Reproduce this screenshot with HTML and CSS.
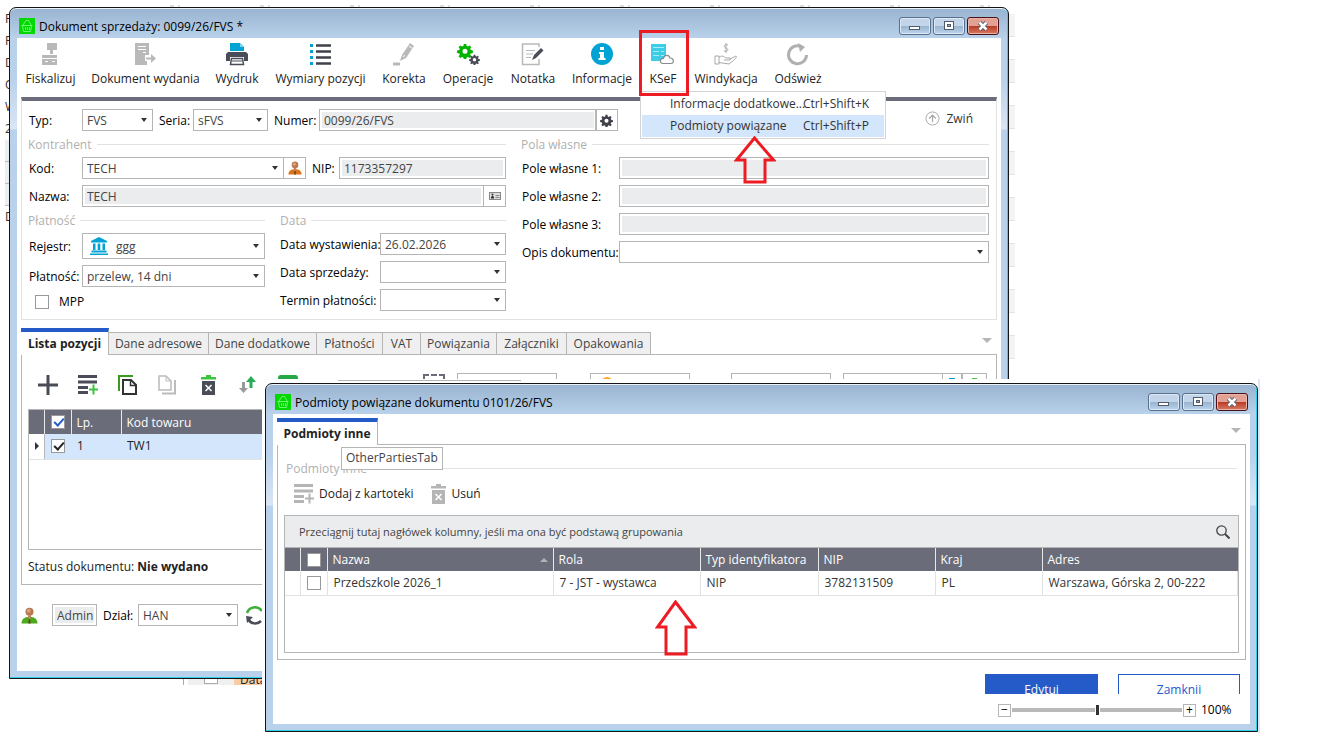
FILE: index.html
```html
<!DOCTYPE html>
<html lang="pl">
<head>
<meta charset="utf-8">
<title>Dokument sprzedaży: 0099/26/FVS</title>
<link rel="stylesheet" href="styles.css">
</head>
<body>
<svg class="defs" aria-hidden="true">
  <symbol id="basket" viewBox="0 0 16 16"><rect width="16" height="16" fill="#00d800"/><g fill="none" stroke="#6ff56f"><path d="M4 7 L7 2.500 H9.500 L12 7"/><path d="M2.500 7.500 H13.500 M3.500 8 L4.500 13.500 H11.500 L12.500 8 M6.500 9 V12 M8.500 9 V12 M10.500 9 V12"/></g></symbol>
  <symbol id="gear" viewBox="0 0 16 16"><path fill-rule="evenodd" d="M6.800 1h2.400l.4 2 1.300.6 1.800-1.200 1.600 1.700-1.100 1.800.5 1.200 2.200.5v2.300l-2.200.5-.5 1.200 1.200 1.800-1.700 1.600-1.800-1.100-1.300.5-.4 2.100H6.800l-.4-2.100-1.300-.5-1.800 1.100-1.600-1.600 1.100-1.800-.5-1.200-2.200-.5V7.600l2.200-.5.5-1.200-1.100-1.800 1.600-1.700 1.800 1.200 1.300-.6zM8 5.800a2.500 2.500 0 100 5 2.500 2.500 0 000-5z"/></symbol>
  <symbol id="person" viewBox="0 0 16 16"><path d="M0.500 15.500 C0.500 11.500 3 10 6 9.500 H10 C13 10 15.500 11.500 15.500 15.500 Z" fill="currentColor"/><path d="M6.500 8 H9.500 L9 11 L8 12 L7 11 Z" fill="#c08560"/><circle cx="8" cy="4.500" r="3.800" fill="#b87850"/><circle cx="7.300" cy="3.600" r="1.900" fill="#d7a080"/><path d="M7.300 11.500 H8.700 L9 15.500 H7 Z" fill="#60401c"/></symbol>
  <symbol id="addlines" viewBox="0 0 20 20"><path d="M0 1.500 H19 M0 7 H19 M0 12.500 H10 M0 17.500 H10" stroke="currentColor" stroke-width="3"/><path d="M15.500 9.500 V19.500 M11 14.500 H20" stroke="var(--accent, currentColor)" stroke-width="2"/></symbol>
  <symbol id="trash" viewBox="0 0 16 20"><path d="M0 2 H5 V0 H10 V2 H15 V4.500 H0 Z" fill="var(--accent, currentColor)"/><path d="M1 6 H14 V20 H1 Z" fill="currentColor"/><path d="M4.500 10 L10.500 16 M10.500 10 L4.500 16" stroke="#fff" stroke-width="1.500"/></symbol>
</svg>

<div class="behind behind-left" aria-hidden="true"><span>P</span><span>P</span><span>D</span><span>O</span><span>W</span><span>2</span><i></i><i></i><i></i><span>D</span></div>
<div class="behind behind-top" aria-hidden="true"></div>
<div class="behind behind-right" aria-hidden="true"></div>
<div class="behind behind-bottom" aria-hidden="true"><i></i><b>Data</b></div>

<main class="window main-window">
  <header class="titlebar">
    <svg class="app-icon"><use href="#basket"/></svg>
    <h1>Dokument sprzedaży: 0099/26/FVS *</h1>
    <div class="winbtns">
      <button class="winbtn" aria-label="Minimalizuj"><svg viewBox="0 0 14 10"><rect x="1.500" y="5.500" width="10" height="3" fill="#fff" stroke="#535b6b"/></svg></button>
      <button class="winbtn" aria-label="Maksymalizuj"><svg viewBox="0 0 14 10"><rect x="2.500" y=".5" width="9" height="8" fill="#fff" stroke="#535b6b"/><rect x="5.500" y="3.500" width="3" height="2" fill="#98b3d0" stroke="#535b6b"/></svg></button>
      <button class="winbtn close" aria-label="Zamknij okno"><svg viewBox="0 0 14 10"><path d="M3.500 1.500 L10.500 8.500 M10.500 1.500 L3.500 8.500" stroke="#535b6b" stroke-width="4.500"/><path d="M3.500 1.500 L10.500 8.500 M10.500 1.500 L3.500 8.500" stroke="#fff" stroke-width="2.500"/></svg></button>
    </div>
  </header>

  <div class="client">
    <nav class="ribbon">
      <button><svg viewBox="0 0 24 24" fill="#b9b9b9"><path d="M8 0H18V7H14V11H11V7H8Z"/><path d="M3 12H18V15H3Z"/><path d="M3 16H18V22H3Z"/><path d="M6 18.500H9M13 18.500H16" stroke="#fff"/></svg>Fiskalizuj</button>
      <button><svg viewBox="0 0 24 24" fill="#b9b9b9"><path d="M1 0H15V12H11V18H13V22H1Z"/><path d="M4 3.500H12M4 6.500H12M9 9.500H12" stroke="#fff" stroke-width="1"/><path d="M12 14.500H17V11L22 15.500L17 20V16.500H12Z"/></svg>Dokument wydania</button>
      <button><svg viewBox="0 0 24 24"><path d="M5 0H15L19 4V8H5Z" fill="#00a3d3"/><path d="M15 0V4H19" fill="#7fd4ec"/><path d="M3 9H21L23 11V18H19V14H5V18H1V11Z" fill="#4a4d57"/><path d="M6.500 15.500H17.500L18.500 21.500H5.500Z" fill="#fff" stroke="#4a4d57" stroke-width="1.500"/><path d="M7 18H17" stroke="#4a4d57"/></svg>Wydruk</button>
      <button><svg viewBox="0 0 24 24"><path d="M7 2.500H22M7 8.500H22M7 14.500H22M7 20.500H22" stroke="#3f424b" stroke-width="2.500"/><path d="M1 2.500H4M1 8.500H4M1 14.500H4M1 20.500H4" stroke="#00a3d3" stroke-width="3"/></svg>Wymiary pozycji</button>
      <button><svg viewBox="0 0 24 24"><path d="M1 21H8" stroke="#b9b9b9" stroke-width="3"/><path d="M8 18L10 12L18 0L22 3L14 15Z" fill="#b9b9b9"/><path d="M17 3L20.500 5.500M11.500 14L12.500 12" stroke="#fff"/></svg>Korekta</button>
      <button><svg viewBox="0 0 24 24"><use href="#gear" x="1" y="0" width="16" height="16" fill="#00b400"/><use href="#gear" x="13" y="11" width="11" height="11" fill="#4a4d57"/></svg>Operacje</button>
      <button><svg viewBox="0 0 24 24" fill="none"><path d="M18 4V1H1.500V21.500H18V16" stroke="#b9b9b9" stroke-width="1.500"/><path d="M5 7.500H14M5 11H12M5 14.500H10" stroke="#b9b9b9"/><path d="M11 17L13 12L20 5L22.500 7.500L15 15Z" fill="#4a4d57"/></svg>Notatka</button>
      <button><svg viewBox="0 0 24 24"><circle cx="12" cy="11" r="11" fill="#00a3d3"/><path d="M10 4H14V7H10ZM9 9H14V15H15.500V17H8.500V15H10V11H9Z" fill="#fff"/></svg>Informacje</button>
      <div class="ksef">
        <button><svg viewBox="0 0 24 24"><path d="M0 1H15V18H0Z" fill="#3dcde8"/><path d="M2 4.500H13M2 8.500H8M10 8.500H13M2 12.500H8M10 12.500H13" stroke="#a8ecf7" stroke-width="1"/><path d="M12 20.500C8 20.500 9 15 12.500 15.500C13 11.500 18 11.500 19 15C23 15 23.500 20.500 20 20.500Z" fill="#fff" stroke="#8b8b8b" stroke-width="1.200"/></svg>KSeF</button>
        <div class="menu" role="menu">
          <button role="menuitem"><span>Informacje dodatkowe...</span><span>Ctrl+Shift+K</span></button>
          <button role="menuitem" class="active"><span>Podmioty powiązane</span><span>Ctrl+Shift+P</span></button>
          <svg class="arrow" viewBox="0 0 42 48"><path d="M20.500 2L39.500 24H31V46H11V24H2.500Z"/></svg>
        </div>
        <div class="marker"></div>
      </div>
      <button><svg viewBox="0 0 24 24" fill="none" stroke="#a9a9a9"><path d="M14 2C10 1 9 4 12 5C15.500 6 14 9 10 8M12 0V10"/><path d="M1 13H5V21H1ZM5 14C9 12 10 14 12 15H16V17H10M16 16L22 13C24 14 19 18 15 21L5 19.500"/></svg>Windykacja</button>
      <button><svg viewBox="0 0 24 24" fill="none"><path d="M15 3.500A9 9 0 1 0 20.500 12" stroke="#b0b0b0" stroke-width="3"/><path d="M12 0L19 4L14 9Z" fill="#b0b0b0"/></svg>Odśwież</button>
    </nav>

    <section class="form">
      <div class="row row-top">
        <label class="lbl c53" for="typ">Typ:</label>
        <span class="select w71"><select id="typ"><option>FVS</option></select></span>
        <label class="lbl c40" for="seria">Seria:</label>
        <span class="select w75"><select id="seria"><option>sFVS</option></select></span>
        <label class="lbl c51" for="numer">Numer:</label>
        <input class="field ro w278" id="numer" value="0099/26/FVS" readonly>
        <button class="side" aria-label="Ustawienia numeru"><svg width="13" height="13" fill="#3f424b"><use href="#gear"/></svg></button>
        <button class="collapse"><svg viewBox="0 0 16 16" fill="none" stroke="#a9a9a9"><circle cx="8" cy="8" r="7"/><path d="M8 12V4.500M4.500 8L8 4.500L11.500 8" stroke-width="1.300"/></svg>Zwiń</button>
      </div>
      <div class="form-cols">
        <div class="left">
          <h2 class="legend">Kontrahent</h2>
          <div class="row">
            <label class="lbl c53" for="kod">Kod:</label>
            <span class="select grow"><select id="kod"><option>TECH</option></select></span>
            <button class="side" aria-label="Kontrahent"><svg class="orange" width="14" height="14"><use href="#person"/></svg></button>
            <label class="lbl c33" for="nip">NIP:</label>
            <input class="field ro w167" id="nip" value="1173357297" readonly>
          </div>
          <div class="row">
            <label class="lbl c53" for="nazwa">Nazwa:</label>
            <input class="field ro grow" id="nazwa" value="TECH" readonly>
            <button class="side" aria-label="Wizytówka"><svg width="12" height="8"><rect x=".5" y=".5" width="11" height="7" fill="#ddd" stroke="#888"/><path d="M2 6.500V5L3.500 3.500L5 5V6.500Z" fill="#333"/><circle cx="3.500" cy="2.500" r="1" fill="#333"/><path d="M6.500 3.500H10.500M6.500 5.500H10.500" stroke="#888"/></svg></button>
          </div>
          <div class="pay-cols">
            <div>
              <h2 class="legend">Płatność</h2>
              <div class="row tall">
                <label class="lbl c53" for="rejestr">Rejestr:</label>
                <span class="select bank grow"><svg viewBox="0 0 18 18" fill="#00a3d3"><path d="M9 0L17 4V5.500H1V4Z"/><path d="M3 6.500H5.500V13H3ZM7.700 6.500H10.300V13H7.700ZM12.500 6.500H15V13H12.500Z"/><path d="M1.500 13.500H16.500V15.500H1.500ZM0 16.500H18V18H0Z"/></svg><select id="rejestr"><option>ggg</option></select></span>
              </div>
              <div class="row">
                <label class="lbl c53" for="platnosc">Płatność:</label>
                <span class="select grow"><select id="platnosc"><option>przelew, 14 dni</option></select></span>
              </div>
              <label class="mpp"><input type="checkbox" class="check">MPP</label>
            </div>
            <div class="dates">
              <h2 class="legend">Data</h2>
              <div class="row"><label class="lbl grow" for="dw">Data wystawienia:</label><span class="select w126"><select id="dw"><option>26.02.2026</option></select></span></div>
              <div class="row"><label class="lbl grow" for="ds">Data sprzedaży:</label><span class="select w126"><select id="ds"><option></option></select></span></div>
              <div class="row"><label class="lbl grow" for="tp">Termin płatności:</label><span class="select w126"><select id="tp"><option></option></select></span></div>
            </div>
          </div>
        </div>
        <div class="right">
          <h2 class="legend">Pola własne</h2>
          <div class="row"><label class="lbl c98" for="p1">Pole własne 1:</label><input class="field ro grow" id="p1" readonly></div>
          <div class="row"><label class="lbl c98" for="p2">Pole własne 2:</label><input class="field ro grow" id="p2" readonly></div>
          <div class="row"><label class="lbl c98" for="p3">Pole własne 3:</label><input class="field ro grow" id="p3" readonly></div>
          <div class="row"><label class="lbl c98" for="opis">Opis dokumentu:</label><span class="select grow"><select id="opis"><option></option></select></span></div>
        </div>
      </div>
    </section>

    <div class="tabs main-tabs" role="tablist">
      <button role="tab" class="current">Lista pozycji</button>
      <button role="tab">Dane adresowe</button>
      <button role="tab">Dane dodatkowe</button>
      <button role="tab">Płatności</button>
      <button role="tab">VAT</button>
      <button role="tab">Powiązania</button>
      <button role="tab">Załączniki</button>
      <button role="tab">Opakowania</button>
      <span class="tabs-more"></span>
    </div>
    <section class="panel items">
      <div class="item-tools">
        <button aria-label="Dodaj"><svg viewBox="0 0 20 20"><path d="M10 0V20M0 10H20" stroke="#4a4d57" stroke-width="3"/></svg></button>
        <button aria-label="Dodaj z kartoteki"><svg class="dark" viewBox="0 0 20 20"><use href="#addlines"/></svg></button>
        <button aria-label="Kopiuj"><svg viewBox="0 0 20 20" fill="none"><path d="M1 16V1H15" stroke="#3c9a1c" stroke-width="2"/><path d="M5 5H13L18 10V19H5Z" stroke="#333" stroke-width="2"/><path d="M12.500 5V10.500H18" stroke="#333" stroke-width="1.500"/></svg></button>
        <button aria-label="Wklej"><svg viewBox="0 0 20 20" fill="none" stroke="#bbb"><path d="M1 1H8L13 6V15H1Z" stroke-width="1.500"/><path d="M8 1V6H13"/><path d="M4 18.500H17V5" stroke-width="2"/></svg></button>
        <button aria-label="Usuń"><svg class="dark" viewBox="-3 0 20 20"><use href="#trash" width="16" height="20"/></svg></button>
        <button aria-label="Kolejność"><svg viewBox="0 0 20 20"><path d="M13 1L18 7H14.500V13H11.500V7H8Z" fill="#27ae55"/><path d="M4 7H7V13H10L5.500 18L1 13H4Z" fill="#999"/></svg></button>
        <span class="green-tool"></span><span class="scan-tool"></span>
        <input class="field" aria-label="Rabat"><span class="select coin"><svg viewBox="0 0 12 12"><circle cx="6" cy="6" r="6" fill="#ffa726"/></svg></span><input class="field" aria-label="Cena"><input class="field amount" aria-label="Ilość"><span class="tool-pair"><i class="cyan"></i><i class="green"></i></span>
      </div>
      <div class="grid-box">
        <table class="grid">
          <colgroup><col class="k15"><col class="k27"><col class="k50"><col></colgroup>
          <thead><tr><th></th><th class="tick"><input type="checkbox" class="check blue" aria-label="Zaznacz wszystko" checked></th><th>Lp.</th><th>Kod towaru</th></tr></thead>
          <tbody><tr class="selected"><td class="pointer"></td><td class="tick"><input type="checkbox" class="check" aria-label="Pozycja 1" checked></td><td>1</td><td>TW1</td></tr></tbody>
        </table>
      </div>
      <p class="status">Status dokumentu: <strong>Nie wydano</strong></p>
    </section>
    <footer class="foot">
      <svg class="lime" width="17" height="17"><use href="#person"/></svg>
      <input class="field ro" value="Admin" aria-label="Operator" readonly>
      <label class="lbl" for="dzial">Dział:</label>
      <span class="select w100"><select id="dzial"><option>HAN</option></select></span>
      <svg width="20" height="20" viewBox="0 0 20 20" fill="none" stroke-width="2.500"><path d="M2 8C4 2 12 0 17 6" stroke="#3fae3a"/><path d="M16 16C12 20 6 19 3 14" stroke="#4a4d57"/><path d="M1 11L8 12L2 18Z" fill="#4a4d57"/></svg>
    </footer>
  </div>
</main>

<div class="overlay">
  <div class="hairline"></div>
  <section class="window">
    <header class="titlebar">
      <svg class="app-icon"><use href="#basket"/></svg>
      <h1>Podmioty powiązane dokumentu 0101/26/FVS</h1>
      <div class="winbtns">
        <button class="winbtn" aria-label="Minimalizuj"><svg viewBox="0 0 14 10"><rect x="1.500" y="5.500" width="10" height="3" fill="#fff" stroke="#535b6b"/></svg></button>
        <button class="winbtn" aria-label="Maksymalizuj"><svg viewBox="0 0 14 10"><rect x="2.500" y=".5" width="9" height="8" fill="#fff" stroke="#535b6b"/><rect x="5.500" y="3.500" width="3" height="2" fill="#98b3d0" stroke="#535b6b"/></svg></button>
        <button class="winbtn close" aria-label="Zamknij okno"><svg viewBox="0 0 14 10"><path d="M3.500 1.500 L10.500 8.500 M10.500 1.500 L3.500 8.500" stroke="#535b6b" stroke-width="4.500"/><path d="M3.500 1.500 L10.500 8.500 M10.500 1.500 L3.500 8.500" stroke="#fff" stroke-width="2.500"/></svg></button>
      </div>
    </header>
    <div class="client">
      <div class="tabs party-tabs" role="tablist">
        <button role="tab" class="current">Podmioty inne<span class="tooltip" role="tooltip">OtherPartiesTab</span></button>
        <span class="tabs-more"></span>
      </div>
      <div class="panel parties">
        <h2 class="legend">Podmioty inne</h2>
        <div class="party-tools">
          <button><svg viewBox="0 0 20 20"><use href="#addlines"/></svg>Dodaj z kartoteki</button>
          <button><svg class="bin" viewBox="0 0 16 20"><use href="#trash"/></svg>Usuń</button>
        </div>
        <div class="grid-box">
          <div class="group-bar"><span>Przeciągnij tutaj nagłówek kolumny, jeśli ma ona być podstawą grupowania</span><button aria-label="Szukaj"><svg viewBox="0 0 14 14" fill="none" stroke="#444"><circle cx="5.500" cy="5.500" r="4.700" stroke-width="1.300"/><path d="M9 9L13.500 13.500" stroke-width="2"/></svg></button></div>
          <table class="grid tight">
            <colgroup><col class="k15"><col class="k27"><col class="k226"><col class="k147"><col class="k118"><col class="k117"><col class="k107"><col></colgroup>
            <thead><tr><th></th><th class="tick"><input type="checkbox" class="check" aria-label="Zaznacz wszystko"></th><th class="sorted">Nazwa</th><th>Rola</th><th>Typ identyfikatora</th><th>NIP</th><th>Kraj</th><th>Adres</th></tr></thead>
            <tbody><tr><td class="handle"></td><td class="tick"><input type="checkbox" class="check" aria-label="Przedszkole 2026_1"></td><td>Przedszkole 2026_1</td><td>7 - JST - wystawca</td><td>NIP</td><td>3782131509</td><td>PL</td><td>Warszawa, Górska 2, 00-222</td></tr></tbody>
          </table>
          <svg class="arrow" viewBox="0 0 42 56"><path d="M20.500 2L39.500 27H31V54H11V27H2.500Z"/></svg>
        </div>
      </div>
      <div class="actions"><button class="primary">Edytuj</button><button>Zamknij</button></div>
      <div class="zoom">
        <button aria-label="Pomniejsz">−</button><input type="range" min="50" max="150" value="100" aria-label="Powiększenie"><button aria-label="Powiększ">+</button><output>100%</output>
      </div>
    </div>
  </section>
</div>
</body>
</html>
```
FILE: styles.css
```css
* { box-sizing: border-box; }
body { margin: 0; min-height: 100vh; background: #fff; overflow: hidden; font: 12px/16px "Open Sans", "Noto Sans", sans-serif; color: #333; }
button, input, select { font: inherit; color: inherit; margin: 0; padding: 0; border: 0; background: none; border-radius: 0; }
button { white-space: nowrap; }
svg { display: block; flex: none; }
.defs { position: absolute; width: 0; height: 0; }
h1, h2, p { margin: 0; font: inherit; }

/* slivers of the application behind the windows */
.behind { position: absolute; overflow: hidden; }
.behind-left { left: 5px; top: 8px; width: 4px; height: 480px; }
.behind-left span { display: block; height: 22px; line-height: 22px; }
.behind-left i { display: block; height: 22px; background: #eceef1; border-bottom: 1px solid #bbb; }
.behind-top { left: 170px; right: 318px; top: 5px; height: 2px; opacity: .3; background: repeating-linear-gradient(90deg, #888 0 4px, #fff 4px 8px, #999 8px 10px, #fff 10px 90px); }
.behind-right { left: calc(100% - 318px); top: 14px; width: 6px; height: 346px; background: repeating-linear-gradient(#f4f4f4 0 22px, #e4e4e4 22px 23px, #fff 23px 45px, #e4e4e4 45px 46px); }
.behind-bottom { left: 183px; bottom: 57px; width: 80px; height: 6px; border-left: 1px solid #aaa; display: flex; gap: 16px; padding-left: 20px; background: linear-gradient(90deg, #fff 4px, #f0f0f0 4px); }
.behind-bottom i { width: 14px; height: 5px; border: 1px solid #aaa; border-top: 0; background: #fff; flex: none; }
.behind-bottom b { flex: 1; background: #f8cda4; padding-left: 6px; font-weight: 400; line-height: 2px; color: #222; }

/* window frame */
.window { display: flex; flex-direction: column; padding: 0 7px 7px; border: 1px solid #151515; border-radius: 7px 7px 0 0; background: linear-gradient(#98b3d0, #b9d1ea 30px, #b9d1ea 70px, #d9e6f5 121px, #b9d1ea 122px); box-shadow: inset -1px -1px #2fd0e8, inset 0 1px #eaf2fa; }
.main-window { position: absolute; left: 9px; right: 318px; top: 7px; bottom: 63px; }
.titlebar { display: flex; align-items: center; gap: 4px; height: 30px; padding: 0 2px; flex: none; }
.titlebar h1 { flex: 1; padding-top: 8px; color: #000; }
.app-icon { width: 16px; height: 16px; margin-top: 6px; }
.winbtns { display: flex; gap: 2px; margin-top: 6px; }
.winbtn { display: grid; place-items: center; width: 32px; height: 18px; border: 1px solid #5b6f8f; border-radius: 3px; box-shadow: inset 0 0 0 1px #dce9f6; background: linear-gradient(#c3d5e9 50%, #98b3d0 50%, #bcd3ea); }
.winbtn svg { width: 14px; height: 10px; }
.winbtn.close { border-color: #4a1018; box-shadow: inset 0 0 0 1px #e8b5ab; background: linear-gradient(#e3a094 50%, #b83a22 50%, #d87a64); }
.client { flex: 1; min-height: 0; display: flex; flex-direction: column; background: #fff; padding: 0 4px; }

/* toolbar */
.ribbon { display: grid; grid-template-columns: 67px 123px 60px 107px 60px 68px 62px 76px 46px 80px 64px; height: 59px; margin: 0 -4px; flex: none; }
.ribbon > button, .ksef > button { display: flex; flex-direction: column; align-items: center; padding-top: 5px; width: 100%; line-height: 24px; color: #222; }
.ribbon svg:not(.arrow) { width: 24px; height: 24px; }
.ksef { position: relative; }
.marker { position: absolute; z-index: 3; left: -1px; top: -8px; width: 50px; height: 66px; border: 3px solid #ed1c24; pointer-events: none; }
.menu { position: absolute; z-index: 2; left: 0; top: 53px; width: 246px; padding: 1px; border: 1px solid #d4d4d4; background: #fff; }
.menu button { display: grid; grid-template-columns: 133px 1fr; width: 100%; height: 22px; padding-left: 28px; align-items: center; text-align: left; }
.menu button.active { background: #d3e6fb; }
.arrow { position: absolute; fill: none; stroke: #ed1c24; stroke-width: 3; }
.menu .arrow { left: 93px; top: 44px; width: 42px; height: 48px; }

/* form */
.form { border: 1px solid #e2e2e2; border-top: 4px solid #6a6d79; padding: 8px 7px 8px 6px; height: 223px; flex: none; }
.row { display: flex; align-items: center; height: 22px; margin-bottom: 6px; }
.row.tall { height: 26px; }
.row-top { margin-bottom: 0; }
.lbl { color: #000; white-space: nowrap; padding: 2px 0 0 1px; }
.c53 { width: 54px; } .c40 { width: 40px; padding-left: 6px; } .c51 { width: 51px; padding-left: 6px; } .c33 { width: 33px; padding-left: 6px; } .c98 { width: 98px; }
.w71 { width: 71px; } .w75 { width: 75px; } .w100 { width: 100px; } .w126 { width: 126px; } .w167 { width: 167px; } .w278 { width: 278px; }
.grow { flex: 1; min-width: 0; }
.field { height: 22px; border: 1px solid #b5b5b5; padding: 0 4px; background: #fff; color: #444; }
.field.ro { padding: 2px 2px 2px 4px; background: #ebecee; box-shadow: inset 0 0 0 2px #fff; }
.select { position: relative; display: flex; height: 22px; border: 1px solid #b5b5b5; background: #fff; }
.select select { appearance: none; width: 100%; padding: 2px 16px 0 4px; color: #444; }
.select::after { content: ""; position: absolute; right: 5px; top: 8px; border: 3px solid transparent; border-top: 4px solid #333; border-bottom: 0; pointer-events: none; }
.tall .select { height: 26px; }
.tall .select::after { top: 10px; }
.bank { align-items: center; padding-left: 7px; }
.bank svg { width: 18px; height: 18px; }
.bank select { padding-left: 8px; }
.side { width: 23px; height: 22px; margin-left: -1px; display: grid; place-items: center; border: 1px solid #b5b5b5; flex: none; }
.row-top .side { margin-left: -2px; }
.orange { color: #e0731a; } .lime { color: #4caa1c; }
.collapse { display: flex; align-items: center; gap: 6px; margin-left: auto; padding: 0 16px 3px 0; }
.collapse svg { width: 15px; height: 15px; }
.form-cols { display: grid; grid-template-columns: minmax(0, 478px) minmax(0, 1fr); gap: 15px; padding-top: 5px; }
.legend { display: flex; align-items: center; gap: 5px; height: 17px; margin-bottom: 4px; color: #b0b0b0; white-space: nowrap; }
.legend::after { content: ""; flex: 1; height: 1px; background: #e2e2e2; }
.pay-cols { display: grid; grid-template-columns: 237px minmax(0, 1fr); gap: 15px; }
.pay-cols .legend { margin: -1px 0 4px; }
.dates .lbl { padding-left: 0; }
.mpp { display: flex; align-items: center; gap: 10px; padding: 1px 0 0 7px; color: #000; }
.check { appearance: none; width: 14px; height: 14px; border: 1px solid #999; background: #fff; flex: none; position: relative; }
.check:checked::after { content: ""; position: absolute; left: 4px; top: 0; width: 4px; height: 8px; border: solid #222; border-width: 0 2px 2px 0; transform: rotate(42deg); }
.check.blue:checked::after { border-color: #245bc8; }

/* tabs and panels */
.tabs { display: grid; align-items: end; flex: none; height: 27px; }
.main-tabs { margin-top: 8px; grid-template-columns: 88px 100px 108px 66px 38px 76px 70px 84px 1fr; }
.party-tabs { grid-template-columns: 101px 1fr; }
.tabs button { height: 23px; border: 1px solid #b5b5b5; border-left-width: 0; background: #efefef; color: #444; }
.tabs button.current { position: relative; z-index: 1; height: 27px; border: 1px solid #b5b5b5; border-width: 4px 1px 0 0; border-top-color: #245bc8; background: #fff; font-weight: 700; color: #222; }
.tabs-more { justify-self: end; margin: 0 5px 12px 0; border: 5px solid transparent; border-top: 5px solid #b5b5b5; border-bottom: 0; }
.tooltip { position: absolute; left: 64px; top: 25px; height: 23px; padding: 2px 4px; border: 1px solid #b5b5b5; background: #fff; font-weight: 400; color: #444; }
.panel { border: 1px solid #b5b5b5; margin-top: -1px; padding: 0 7px; display: flex; flex-direction: column; }
.items { height: 231px; padding-left: 6px; }
.item-tools { display: flex; align-items: flex-start; gap: 20px; height: 54px; padding: 20px 0 0 10px; flex: none; }
.item-tools svg { width: 20px; height: 20px; }
.item-tools .field { width: 100px; margin-top: -2px; }
.item-tools .amount { margin-left: -8px; }
.dark { color: #4a4d57; --accent: #3fc43f; }
.green-tool { width: 20px; height: 20px; border-radius: 3px; background: #27a844; }
.scan-tool { width: 22px; height: 20px; margin: -1px -8px 0 105px; border: 2px dashed #6a6d79; }
.coin { width: 100px; margin: -2px 21px 0 13px; padding: 2px 10px; }
.coin::after { content: none; }
.item-tools .coin svg { width: 12px; height: 12px; margin-top: 1px; }
.tool-pair { display: flex; flex: 1; height: 22px; margin: -2px 2px 0 -21px; }
.tool-pair i { flex: 1; border: 1px solid #b5b5b5; padding: 4px 6px; }
.tool-pair .cyan { background: #00a3d3 content-box; background-clip: content-box; }
.tool-pair .green { padding: 4px 9px; background: #3fc43f content-box; background-clip: content-box; }
.grid-box { position: relative; flex: 1; min-height: 0; border: 1px solid #b5b5b5; }
.grid { width: 100%; table-layout: fixed; border-collapse: collapse; text-align: left; }
.grid th { height: 24px; padding: 1px 4px 0 5px; font-weight: 400; color: #fff; background: #6a6d79; border-right: 1px solid #e8e8e8; white-space: nowrap; }
.grid td { height: 25px; padding: 0 5px 0 6px; border-right: 1px solid #e2e2e2; border-bottom: 1px solid #e2e2e2; white-space: nowrap; }
.grid.tight th { height: 23px; }
.grid.tight td { height: 24px; padding-top: 1px; }
.grid th:last-child { border-right: 0; }
.grid .tick { padding: 0; }
.tick .check { display: block; margin: auto; }
.grid .selected td { background: #d3e6fb; border-right: 0; color: #222; }
.grid .selected .pointer { background: #fff; border-right: 1px solid #b5b5b5; }
.pointer::after { content: ""; display: block; border: 4px solid transparent; border-left: 4px solid #333; border-right: 0; width: 4px; }
.k15 { width: 15px; } .k27 { width: 27px; } .k50 { width: 50px; } .k226 { width: 226px; } .k147 { width: 147px; } .k118 { width: 118px; } .k117 { width: 117px; } .k107 { width: 107px; }
.sorted { position: relative; }
.sorted::after { content: ""; position: absolute; right: 5px; top: 10px; border: 4px solid transparent; border-bottom: 4px solid #b5b5b5; border-top: 0; }
.status { height: 34px; line-height: 34px; color: #222; }
.foot { display: flex; align-items: center; padding-top: 19px; }
.foot .field { width: 45px; margin: 0 5px 0 14px; }
.foot .lbl { width: 36px; }
.foot > svg:last-child { margin-left: 7px; }

/* second window */
.overlay { position: absolute; z-index: 5; left: 262px; right: 67px; top: 379px; bottom: 9px; padding: 4px 0 1px 3px; background: #fff; border-right: 2px solid #dce6f4; }
.hairline { position: absolute; left: 76px; top: 1px; width: 183px; height: 1px; background: #b5b5b5; }
.overlay .window { height: 100%; }
.overlay .client { padding-top: 4px; }
.parties { height: 216px; flex: none; padding: 15px 6px 6px; }
.parties .legend { padding: 0 2px; margin-bottom: 5px; }
.party-tools { display: flex; gap: 17px; height: 33px; padding: 2px 0 0 10px; align-items: flex-start; }
.party-tools button { display: flex; align-items: center; gap: 5px; color: #222; }
.party-tools svg { width: 20px; height: 20px; color: #b5b5b5; }
.party-tools .bin { width: 16px; }
.group-bar { display: flex; align-items: center; justify-content: space-between; height: 32px; padding: 0 8px 0 14px; background: #ebecee; border-bottom: 1px solid #b5b5b5; font-size: 11px; color: #444; }
.group-bar svg { width: 14px; height: 14px; }
.parties .arrow { left: 370px; top: 84px; width: 42px; height: 56px; }
.actions { display: flex; justify-content: flex-end; gap: 20px; flex: none; height: 20px; margin: 14px 6px 9px 0; overflow: hidden; }
.actions button { width: 122px; height: 31px; border: 1px solid #245bc8; color: #245bc8; }
.actions .primary { width: 113px; background: #245bc8; color: #fff; }
.zoom { display: flex; align-items: center; justify-content: flex-end; gap: 1px; height: 14px; margin-right: 15px; color: #000; }
.zoom button { width: 13px; height: 13px; line-height: 10px; border: 1px solid #b5b5b5; }
.zoom input { appearance: none; width: 170px; height: 10px; background: linear-gradient(#b9b9b9, #b9b9b9) center / 100% 4px no-repeat; }
.zoom input::-webkit-slider-thumb { appearance: none; width: 5px; height: 10px; background: #333; border: solid #fff; border-width: 0 1px; }
.zoom output { width: 34px; padding-left: 4px; }
```
